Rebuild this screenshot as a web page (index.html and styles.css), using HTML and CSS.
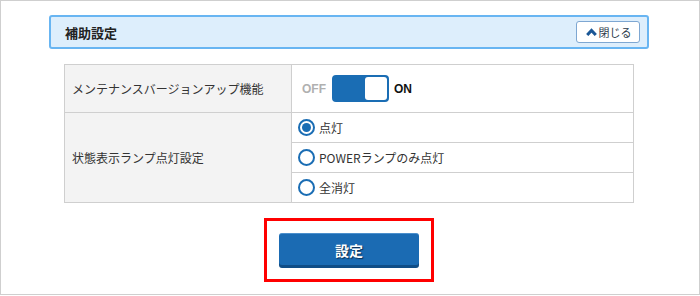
FILE: index.html
```html
<!DOCTYPE html>
<html lang="ja">
<head>
    <meta charset="UTF-8">
    <title>補助設定</title>
    <link rel="stylesheet" href="styles.css">
</head>
<body>
    <div class="frame">
        <div class="panel">
            <div class="panel-header">
                <div class="panel-title">補助設定</div>
                <button class="close-btn">
                    <svg width="11" height="8" viewBox="0 0 11 8"><path d="M1.2 7 L5.5 2.4 L9.8 7" fill="none" stroke="#1b5796" stroke-width="3"/></svg>
                    <span>閉じる</span>
                </button>
            </div>

            <table class="settings">
                <tr class="row-tall">
                    <th>メンテナンスバージョンアップ機能</th>
                    <td>
                        <div class="switch-line">
                            <span class="off">OFF</span>
                            <span class="switch"><span class="knob"></span></span>
                            <span class="on">ON</span>
                        </div>
                    </td>
                </tr>
                <tr>
                    <th rowspan="3">状態表示ランプ点灯設定</th>
                    <td><label class="radio checked"><span class="dot"></span>点灯</label></td>
                </tr>
                <tr>
                    <td><label class="radio"><span class="dot"></span>POWERランプのみ点灯</label></td>
                </tr>
                <tr>
                    <td><label class="radio"><span class="dot"></span>全消灯</label></td>
                </tr>
            </table>

            <div class="actions">
                <div class="highlight">
                    <button class="submit">設定</button>
                </div>
            </div>
        </div>
    </div>
</body>
</html>
```

FILE: styles.css
```css
body {
    margin: 0;
    font-family: "Noto Sans CJK JP", "Noto Sans", sans-serif;
    color: #333;
    background-color: #fff;
}

.frame {
    width: 700px;
    height: 295px;
    box-sizing: border-box;
    border: 1px solid #cfcfcf;
}

.panel {
    width: 600px;
    margin: 14px 0 0 48px;
}

.panel-header {
    display: flex;
    align-items: center;
    justify-content: space-between;
    height: 34px;
    box-sizing: border-box;
    border: 2px solid #68b5f2;
    border-radius: 3px;
    background-color: #ddeefc;
    padding: 0 7px 0 14px;
}

.panel-title {
    font-size: 13px;
    font-weight: bold;
    color: #222;
}

.close-btn {
    display: flex;
    align-items: center;
    justify-content: center;
    gap: 2px;
    width: 64px;
    height: 22px;
    padding: 0 0 0 1px;
    background-color: #fff;
    border: 1px solid #7ea7d2;
    border-radius: 3px;
    font-family: inherit;
    font-size: 11px;
    color: #2b3a4a;
    cursor: pointer;
}

.settings {
    width: 570px;
    margin: 15px 15px 0 15px;
    border-collapse: collapse;
    font-size: 12px;
}

.settings th,
.settings td {
    border: 1px solid #cfcfcf;
    padding: 0;
    height: 29px;
    text-align: left;
    font-weight: normal;
}

.settings th {
    width: 219px;
    background-color: #f3f3f3;
    padding-left: 7px;
    color: #333;
}

.settings td {
    padding-left: 6px;
}

.settings .row-tall th,
.settings .row-tall td {
    height: 47px;
}

.switch-line {
    display: flex;
    align-items: center;
    padding-left: 4px;
    font-family: "Liberation Sans", Arial, sans-serif;
    font-weight: bold;
    font-size: 12px;
}

.off {
    color: #b0b0b0;
    margin-right: 6px;
}

.on {
    color: #111;
    margin-left: 5px;
}

.switch {
    display: flex;
    justify-content: flex-end;
    width: 57px;
    height: 27px;
    box-sizing: border-box;
    border: 2px solid #1a6db4;
    border-radius: 4px;
    background-color: #1a6db4;
}

.knob {
    width: 22px;
    height: 100%;
    background-color: #fff;
    border-radius: 3px;
}

.radio {
    display: flex;
    align-items: center;
    gap: 4px;
    color: #333;
}

.dot {
    width: 17px;
    height: 17px;
    box-sizing: border-box;
    border: 2px solid #1a6db4;
    border-radius: 50%;
    display: flex;
    align-items: center;
    justify-content: center;
}

.radio.checked .dot::after {
    content: "";
    width: 9px;
    height: 9px;
    border-radius: 50%;
    background-color: #1a6db4;
}

.actions {
    display: flex;
    justify-content: center;
    margin-top: 15px;
}

.highlight {
    width: 170px;
    height: 64px;
    box-sizing: border-box;
    border: 3px solid #ff0000;
    display: flex;
    justify-content: center;
    padding-top: 12px;
}

.submit {
    width: 140px;
    height: 32px;
    padding: 0;
    border: none;
    border-top: 1px solid #4b8fcc;
    border-radius: 3px;
    background-color: #1b6bb3;
    box-shadow: 0 3px 0 #104d86;
    color: #fff;
    font-family: inherit;
    font-size: 14px;
    font-weight: bold;
    text-shadow: 1px 1px 1px #0a2f55;
    cursor: pointer;
}
```
